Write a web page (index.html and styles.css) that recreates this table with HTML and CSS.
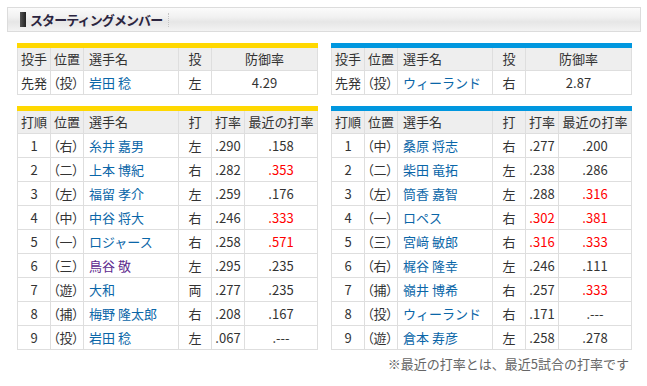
FILE: index.html
```html
<!DOCTYPE html>
<html lang="ja">
<head>
<meta charset="utf-8">
<link rel="stylesheet" href="styles.css">
</head>
<body>
<div class="page">
  <div class="title-bar">
    <span class="title-mark"></span>
    <h2 class="title">スターティングメンバー</h2>
    <span class="title-sep"></span>
  </div>

  <div class="teams">
    <div class="team team-home">
      <table class="grid pitcher">
        <colgroup><col class="c1"><col class="c2"><col class="c3"><col class="c4"><col class="c5w"></colgroup>
        <tr class="head"><th>投手</th><th>位置</th><th class="left">選手名</th><th>投</th><th>防御率</th></tr>
        <tr><td>先発</td><td class="pos">（投）</td><td class="name"><a href="#">岩田 稔</a></td><td>左</td><td>4.29</td></tr>
      </table>

      <table class="grid batting">
        <colgroup><col class="c1"><col class="c2"><col class="c3"><col class="c4"><col class="c5"><col class="c6"></colgroup>
        <tr class="head"><th>打順</th><th>位置</th><th class="left">選手名</th><th>打</th><th>打率</th><th>最近の打率</th></tr>
        <tr><td>1</td><td class="pos">（右）</td><td class="name"><a href="#">糸井 嘉男</a></td><td>左</td><td>.290</td><td>.158</td></tr>
        <tr><td>2</td><td class="pos">（二）</td><td class="name"><a href="#">上本 博紀</a></td><td>右</td><td>.282</td><td class="hot">.353</td></tr>
        <tr><td>3</td><td class="pos">（左）</td><td class="name"><a href="#">福留 孝介</a></td><td>左</td><td>.259</td><td>.176</td></tr>
        <tr><td>4</td><td class="pos">（中）</td><td class="name"><a href="#">中谷 将大</a></td><td>右</td><td>.246</td><td class="hot">.333</td></tr>
        <tr><td>5</td><td class="pos">（一）</td><td class="name"><a href="#">ロジャース</a></td><td>右</td><td>.258</td><td class="hot">.571</td></tr>
        <tr><td>6</td><td class="pos">（三）</td><td class="name"><a href="#" class="visited">鳥谷 敬</a></td><td>左</td><td>.295</td><td>.235</td></tr>
        <tr><td>7</td><td class="pos">（遊）</td><td class="name"><a href="#">大和</a></td><td>両</td><td>.277</td><td>.235</td></tr>
        <tr><td>8</td><td class="pos">（捕）</td><td class="name"><a href="#">梅野 隆太郎</a></td><td>右</td><td>.208</td><td>.167</td></tr>
        <tr><td>9</td><td class="pos">（投）</td><td class="name"><a href="#">岩田 稔</a></td><td>左</td><td>.067</td><td>.---</td></tr>
      </table>
    </div>

    <div class="team team-away">
      <table class="grid pitcher">
        <colgroup><col class="c1"><col class="c2"><col class="c3"><col class="c4"><col class="c5w"></colgroup>
        <tr class="head"><th>投手</th><th>位置</th><th class="left">選手名</th><th>投</th><th>防御率</th></tr>
        <tr><td>先発</td><td class="pos">（投）</td><td class="name"><a href="#">ウィーランド</a></td><td>右</td><td>2.87</td></tr>
      </table>

      <table class="grid batting">
        <colgroup><col class="c1"><col class="c2"><col class="c3"><col class="c4"><col class="c5"><col class="c6"></colgroup>
        <tr class="head"><th>打順</th><th>位置</th><th class="left">選手名</th><th>打</th><th>打率</th><th>最近の打率</th></tr>
        <tr><td>1</td><td class="pos">（中）</td><td class="name"><a href="#">桑原 将志</a></td><td>右</td><td>.277</td><td>.200</td></tr>
        <tr><td>2</td><td class="pos">（二）</td><td class="name"><a href="#">柴田 竜拓</a></td><td>左</td><td>.238</td><td>.286</td></tr>
        <tr><td>3</td><td class="pos">（左）</td><td class="name"><a href="#">筒香 嘉智</a></td><td>左</td><td>.288</td><td class="hot">.316</td></tr>
        <tr><td>4</td><td class="pos">（一）</td><td class="name"><a href="#">ロペス</a></td><td>右</td><td class="hot">.302</td><td class="hot">.381</td></tr>
        <tr><td>5</td><td class="pos">（三）</td><td class="name"><a href="#">宮﨑 敏郎</a></td><td>右</td><td class="hot">.316</td><td class="hot">.333</td></tr>
        <tr><td>6</td><td class="pos">（右）</td><td class="name"><a href="#">梶谷 隆幸</a></td><td>左</td><td>.246</td><td>.111</td></tr>
        <tr><td>7</td><td class="pos">（捕）</td><td class="name"><a href="#">嶺井 博希</a></td><td>右</td><td>.257</td><td class="hot">.333</td></tr>
        <tr><td>8</td><td class="pos">（投）</td><td class="name"><a href="#">ウィーランド</a></td><td>右</td><td>.171</td><td>.---</td></tr>
        <tr><td>9</td><td class="pos">（遊）</td><td class="name"><a href="#">倉本 寿彦</a></td><td>左</td><td>.258</td><td>.278</td></tr>
      </table>
      <p class="note">※最近の打率とは、最近5試合の打率です</p>
    </div>
  </div>
</div>
</body>
</html>
```

FILE: styles.css
```css
* { box-sizing: border-box; }
html, body { margin: 0; padding: 0; background: #fff; }
body {
  font-family: "Noto Sans CJK JP", "Noto Sans", sans-serif;
  font-size: 13px;
  color: #333;
}
.page { padding: 7px 6px 0 7px; width: 647px; }

.title-bar {
  display: flex;
  align-items: center;
  height: 25px;
  border: 1px solid #dcdcdc;
  background: linear-gradient(#fbfbfb 0%, #f1f1f1 40%, #e6e6e6 60%, #f3f3f3 100%);
  padding-left: 12px;
}
.title-mark {
  width: 6px;
  height: 15px;
  background: linear-gradient(90deg, #555, #222);
  margin-right: 4px;
}
.title {
  margin: 0;
  font-size: 13px;
  font-weight: bold;
  color: #2b2540;
  line-height: 1;
  letter-spacing: -0.9px;
}
.title-sep {
  margin-left: 6px;
  width: 1px;
  height: 14px;
  border-left: 1px dotted #c4c4c4;
}

.teams {
  display: flex;
  gap: 14px;
  padding-left: 10px;
  margin-top: 11px;
}
.team { width: 300px; }

.grid {
  width: 300px;
  table-layout: fixed;
  border-collapse: collapse;
  margin-bottom: 11px;
}
.team-home .grid { border-top: 5px solid #ffd800; }
.team-away .grid { border-top: 5px solid #0097df; }

.c1, .c2, .c4, .c5 { width: 33px; }
.c3 { width: 95px; }
.c5w { width: 106px; }
.c6 { width: 73px; }

.grid th, .grid td {
  border: 1px solid #dedede;
  height: 24px;
  padding: 0;
  text-align: center;
  font-weight: normal;
  line-height: 22px;
  white-space: nowrap;
  overflow: hidden;
}
.grid .head th { background: #eeeeee; color: #333; }
.grid th.left { text-align: left; padding-left: 5px; }
.grid td.pos { text-align: left; padding-left: 2px; font-feature-settings: "palt"; }
.grid td.name { text-align: left; padding-left: 5px; }
.grid a { color: #0a66a8; text-decoration: none; }
.grid a.visited { color: #5d2a8e; }
.grid td.hot { color: #ff0000; }

.note {
  margin: -5px 0 0 0;
  text-align: right;
  padding-right: 2px;
  color: #666;
  font-size: 13px;
  line-height: 16px;
}
```
